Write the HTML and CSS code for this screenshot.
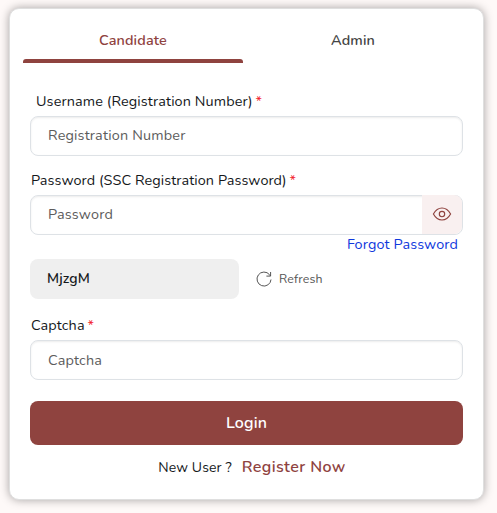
FILE: index.html
```html
<!DOCTYPE html>
<html lang="en">
<head>
    <meta charset="UTF-8">
    <meta name="viewport" content="width=device-width, initial-scale=1.0">
    <title>Candidate Login</title>
    <link rel="stylesheet" href="styles.css">
</head>
<body>

<div class="login-card">
    <div class="tabs">
        <a class="tab active">Candidate</a>
        <a class="tab">Admin</a>
    </div>

    <form class="login-form">
        <label class="username-label" for="username">Username (Registration Number) <span class="required">*</span></label>
        <input class="field raised" type="text" id="username" placeholder="Registration Number">

        <label class="password-label" for="password">Password (SSC Registration Password) <span class="required">*</span></label>
        <div class="password-group">
            <input class="field raised" type="password" id="password" placeholder="Password">
            <button type="button" class="eye-btn" aria-label="Show password">
                <svg width="20" height="16" viewBox="0 0 20 16" fill="none" stroke="#8f433f" stroke-width="1.15">
                    <path d="M1.4 8C3.5 4.2 6.4 2 10 2s6.500 2.200 8.600 6c-2.100 3.800-5 6-8.600 6S3.500 11.800 1.400 8z"/>
                    <circle cx="10" cy="8" r="2.700"/>
                </svg>
            </button>
        </div>
        <a class="forgot">Forgot Password</a>

        <div class="captcha-row">
            <div class="captcha-code">MjzgM</div>
            <button type="button" class="refresh-btn">
                <svg width="16" height="16" viewBox="0 0 16 16" fill="none" stroke="#555" stroke-width="1">
                    <path d="M15 8.500A7 7 0 1 1 13.500 3.700L14.600 5"/>
                    <path d="M14.600 1v4.100h-4.200"/>
                </svg>
                <span>Refresh</span>
            </button>
        </div>

        <label class="captcha-label" for="captcha">Captcha <span class="required">*</span></label>
        <input class="field" type="text" id="captcha" placeholder="Captcha">

        <button type="button" class="login-btn">Login</button>
        <div class="register-row">
            <span class="new-user">New User ?</span>
            <a class="register">Register Now</a>
        </div>
    </form>
</div>

</body>
</html>
```
FILE: styles.css
```css
* {
    box-sizing: border-box;
}
body {
    font-family: Nunito, "Open Sans", sans-serif;
    font-size: 14.4px;
    font-weight: 380;
    letter-spacing: 0.12px;
    height: 513px;
    margin: 0;
    padding: 8px 13px 0 9px;
    background-color: #fef9f8;
    color: #15181b;
    overflow: hidden;
}
button, input {
    font-family: inherit;
    font-weight: inherit;
    letter-spacing: inherit;
}
.login-card {
    height: 492px;
    padding: 0 13px;
    background-color: #fff;
    border: 1px solid #dfdfdf;
    border-radius: 10px;
    box-shadow: 0 0 10px rgba(0, 0, 0, 0.35);
}
.tabs {
    display: flex;
}
.tab {
    width: 220px;
    height: 54px;
    padding-top: 21px;
    line-height: 20px;
    text-align: center;
    letter-spacing: 0.14px;
    font-weight: 560;
    color: #444;
}
.tab.active {
    color: #8f433f;
}
.tab.active::after {
    content: "";
    display: block;
    height: 4px;
    margin-top: 9px;
    background-color: #8f433f;
    border-radius: 3px 3px 0 0;
}
.login-form {
    padding: 0 7px;
}
.login-form label {
    display: block;
    height: 25px;
    line-height: 20px;
    padding-left: 1px;
}
.login-form .username-label {
    margin-top: 28px;
    padding-left: 6px;
}
.login-form .password-label {
    margin-top: 14px;
    letter-spacing: 0.08px;
}
.login-form .captcha-label {
    margin-top: 16px;
}
.required {
    margin-left: -1px;
    color: #f21d2b;
}
.field {
    display: block;
    width: 433px;
    height: 40px;
    padding: 0 17px;
    font-size: 14.4px;
    letter-spacing: 0.18px;
    background-color: #fff;
    border: 1px solid #dee2e6;
    border-radius: 8px;
    box-shadow: inset 0 1px 2px rgba(0, 0, 0, 0.08);
}
.field.raised {
    padding-bottom: 2px;
}
.field::placeholder {
    color: #5c5c5c;
    opacity: 1;
}
.password-group {
    position: relative;
}
.eye-btn {
    position: absolute;
    top: 0;
    right: 1px;
    width: 40px;
    height: 39px;
    padding: 0 0 2px;
    display: flex;
    align-items: center;
    justify-content: center;
    background-color: #f9f0f0;
    border: none;
    border-radius: 0 8px 8px 0;
}
.forgot {
    display: block;
    height: 20px;
    line-height: 18px;
    padding-right: 5px;
    text-align: right;
    color: #1039dd;
}
.captcha-row {
    display: flex;
    align-items: center;
    margin-top: 4px;
}
.captcha-code {
    width: 209px;
    height: 40px;
    line-height: 40px;
    padding-left: 17px;
    font-size: 14px;
    letter-spacing: 0.1px;
    font-weight: 600;
    background-color: #efefef;
    border-radius: 8px;
}
.refresh-btn {
    display: flex;
    align-items: center;
    gap: 7px;
    margin-left: 17px;
    padding: 0;
    font-size: 12.3px;
    font-weight: 400;
    letter-spacing: 0.18px;
    color: #555;
    background: none;
    border: none;
}
.login-btn {
    display: block;
    width: 433px;
    height: 44px;
    margin-top: 21px;
    padding: 0;
    font-size: 16px;
    font-weight: 580;
    color: #fff;
    background-color: #8f433f;
    border: none;
    border-radius: 8px;
}
.register-row {
    display: flex;
    justify-content: center;
    align-items: center;
    gap: 10px;
    height: 24px;
    margin-top: 10px;
    padding-left: 11px;
}
.new-user {
    font-size: 14px;
}
.register {
    font-size: 16px;
    letter-spacing: 0.4px;
    font-weight: 560;
    color: #8f433f;
}
```
